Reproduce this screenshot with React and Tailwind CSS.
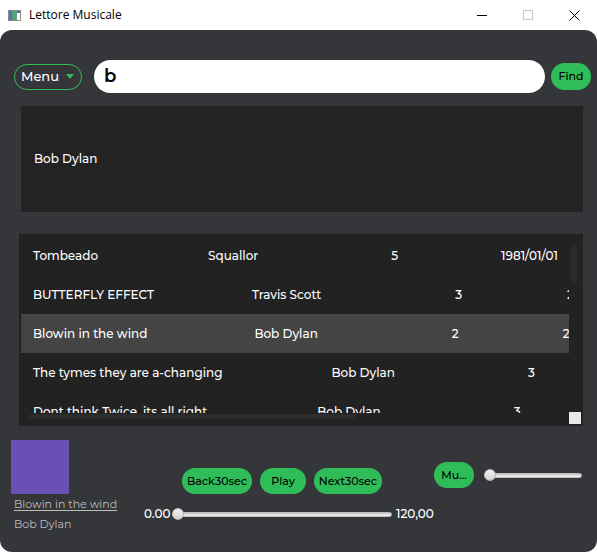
import React from 'react';

const font = "font-['Montserrat','Open_Sans','Noto_Sans',sans-serif]";

const rows = [
  { cells: [['Tombeado', ''], ['Squallor', 'ml-[110px]'], ['5', 'ml-[133px]'], ['1981/01/01', 'ml-[103px]']] },
  { cells: [['BUTTERFLY EFFECT', ''], ['Travis Scott', 'ml-[98px]'], ['3', 'ml-[134px]'], ['2', 'ml-[105px]']] },
  { cells: [['Blowin in the wind', ''], ['Bob Dylan', 'ml-[107px]'], ['2', 'ml-[134px]'], ['2', 'ml-[104px]']], active: true },
  { cells: [['The tymes they are a-changing', ''], ['Bob Dylan', 'ml-[109px]'], ['3', 'ml-[133px]']] },
  { cells: [['Dont think Twice, its all right', ''], ['Bob Dylan', 'ml-[110px]'], ['3', 'ml-[133px]']] },
];

function TitleBar() {
  return (
    <div className="h-[30px] flex items-center bg-white shrink-0">
      <svg width="13" height="11" viewBox="0 0 13 11" className="ml-[8px]">
        <rect x="0.5" y="0.5" width="12" height="10" fill="#fff" stroke="#8a8a8a" />
        <rect x="1" y="1" width="8" height="9" fill="#3c7fb4" />
        <rect x="4" y="1" width="5" height="9" fill="#5aa37a" />
        <rect x="9" y="1" width="3" height="2" fill="#3c7fb4" />
      </svg>
      <span className="ml-[8px] text-[12px] text-black font-['Open_Sans',sans-serif]">Lettore Musicale</span>
      <div className="ml-auto flex items-center">
        <div className="w-[46px] h-[30px] flex items-center justify-center">
          <div className="w-[10px] h-px bg-black" />
        </div>
        <div className="w-[46px] h-[30px] flex items-center justify-center">
          <div className="w-[10px] h-[10px] border border-[#c8c8c8]" />
        </div>
        <div className="w-[46px] h-[30px] flex items-center justify-center">
          <svg width="11" height="11" viewBox="0 0 11 11">
            <path d="M0.5 0.5 L10.5 10.5 M10.5 0.5 L0.5 10.5" stroke="#000" strokeWidth="1" />
          </svg>
        </div>
      </div>
    </div>
  );
}

function Slider({ width, pos }) {
  return (
    <div className={`relative h-[12px] flex items-center ${width}`}>
      <div className="h-[5px] w-full rounded-full bg-gradient-to-b from-[#c9c9c9] to-[#f2f2f2] border border-[#bdbdbd]" />
      <div
        className="absolute top-0 w-[12px] h-[12px] rounded-full bg-gradient-to-b from-[#f4f4f4] to-[#d4d4d4] border border-[#b5b5b5]"
        style={{ left: pos }}
      />
    </div>
  );
}

function GreenButton({ children, className = '' }) {
  return (
    <button className={`h-[26px] rounded-full bg-[#2fbd59] text-black text-[11px] font-medium flex items-center justify-center ${className}`}>
      {children}
    </button>
  );
}

export default function App() {
  return (
    <div className={`w-[597px] h-[552px] bg-white flex flex-col overflow-hidden ${font}`}>
      <TitleBar />
      <main className="flex-1 bg-[#35363a] rounded-[12px] flex flex-col text-white">
        {/* search bar */}
        <div className="flex items-center pt-[30px] pl-[14px] pr-[6px]">
          <button className="w-[68px] h-[26px] rounded-full border border-[#2fbd59] flex items-center pl-[6px] text-[13px] font-medium">
            Menu
            <svg width="8" height="5" viewBox="0 0 8 5" className="ml-[7px]">
              <path d="M0 0 L8 0 L4 5 Z" fill="#2fbd59" />
            </svg>
          </button>
          <div className="ml-[12px] flex-1 h-[33px] rounded-full bg-white flex items-center pl-[10px] text-black text-[18px] font-semibold">
            b
          </div>
          <GreenButton className="ml-[6px] w-[40px] h-[27px]">Find</GreenButton>
        </div>

        {/* suggestions */}
        <div className="mt-[13px] ml-[21px] mr-[14px] h-[106px] bg-[#232323] flex items-center pl-[13px]">
          <span className="text-[12px] font-medium">Bob Dylan</span>
        </div>

        {/* song list */}
        <div className="mt-[22px] ml-[19px] mr-[14px] h-[192px] bg-[#222222] relative pt-[2px] pl-[2px]">
          <div className="w-[548px] h-[177px] overflow-hidden">
            {rows.map((r, i) => (
              <div
                key={i}
                className={`h-[39px] flex items-center pl-[12px] whitespace-nowrap text-[12px] font-medium ${r.active ? 'bg-[#444444]' : ''}`}
              >
                {r.cells.map(([t, cls], j) => (
                  <span key={j} className={`shrink-0 ${cls}`}>{t}</span>
                ))}
              </div>
            ))}
          </div>
          {/* scrollbars */}
          <div className="absolute left-[552px] top-[10px] w-[6px] h-[40px] rounded-full bg-[#2c2c2c]" />
          <div className="absolute left-[10px] top-[180px] w-[328px] h-[5px] rounded-full bg-[#2c2c2c]" />
          <div className="absolute left-[550px] top-[178px] w-[12px] h-[12px] bg-[#e8e8e8]" />
        </div>

        {/* player */}
        <div className="flex mt-[14px]">
          <div className="w-[144px] pl-[11px] flex flex-col">
            <div className="w-[58px] h-[54px] bg-[#6a4fb4]" />
            <span className="mt-[2px] pl-[3px] text-[11px] text-[#bdbdbd] underline underline-offset-2">Blowin in the wind</span>
            <span className="mt-[3px] pl-[3px] text-[11px] text-[#bdbdbd]">Bob Dylan</span>
          </div>
          <div className="w-[290px] flex flex-col">
            <div className="flex pt-[28px] pl-[38px] gap-[8px]">
              <GreenButton className="w-[70px]">Back30sec</GreenButton>
              <GreenButton className="w-[46px]">Play</GreenButton>
              <GreenButton className="w-[68px]">Next30sec</GreenButton>
            </div>
            <div className="flex items-center mt-[13px] h-[14px] text-[12px] font-medium">
              <span className="w-[28px]">0.00</span>
              <Slider width="w-[220px]" pos="0px" />
              <span className="ml-[4px]">120,00</span>
            </div>
          </div>
          <div className="flex items-center h-[26px] mt-[22px]">
            <GreenButton className="w-[40px]">Mu...</GreenButton>
            <div className="ml-[10px]">
              <Slider width="w-[98px]" pos="0px" />
            </div>
          </div>
        </div>
      </main>
    </div>
  );
}
